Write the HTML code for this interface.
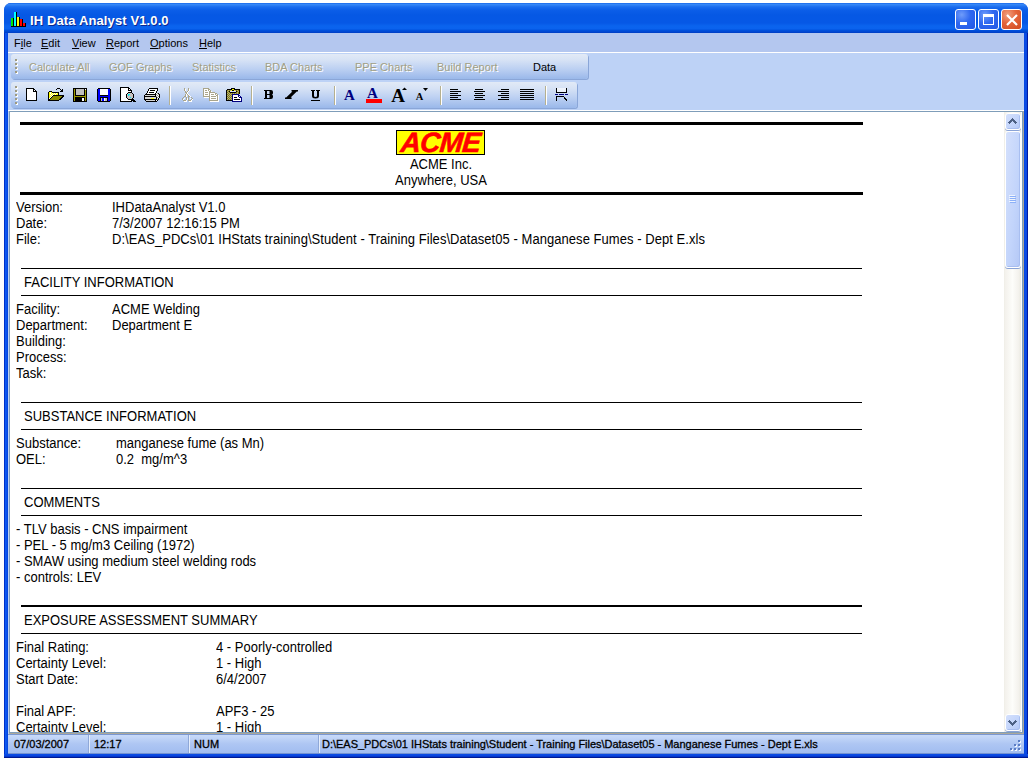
<!DOCTYPE html>
<html><head><meta charset="utf-8">
<style>
*{box-sizing:border-box}
html,body{margin:0;padding:0}
body{width:1033px;height:763px;overflow:hidden;background:#fff;position:relative;font-family:"Liberation Sans",sans-serif}
.a{position:absolute}
#win{left:4px;top:3px;width:1024px;height:755px;background:#0842d8;border-radius:7px 7px 0 0;overflow:hidden}
#title{left:0;top:0;width:1024px;height:30px;background:linear-gradient(to bottom,#0a5ae6 0px,#3a8cf8 1px,#3182f5 2px,#1a6cee 4px,#0c5ee8 7px,#0658e4 12px,#0658e6 20px,#0b64ee 23px,#0a62ee 26px,#0052de 27px,#0046d0 29px,#003cc0 30px)}
#titletext{left:26px;top:10px;font-size:13px;letter-spacing:0.12px;font-weight:bold;color:#fff;text-shadow:1px 1px 0 #0a2a90;white-space:nowrap}
#frameL{left:0;top:30px;width:4px;height:725px;background:linear-gradient(to right,#0030c8 0px,#0030c8 1px,#0a52f0 1px,#1060f4 2px,#0848e0 3px,#0848e0 4px)}
#frameR{left:1020px;top:30px;width:4px;height:725px;background:linear-gradient(to left,#001aa0 0px,#001aa0 1px,#0840d8 1px,#0a50ec 2px,#0848e0 3px,#0848e0 4px)}
#frameB{left:0;top:751px;width:1024px;height:4px;background:linear-gradient(to top,#001890 0px,#001890 1px,#0030c0 1px,#0840d8 2px,#0a4ae4 3px,#0a4ae4 4px)}
.cbtn{top:6px;width:21px;height:21px;border:1px solid #fff;border-radius:3px;
 background:radial-gradient(circle at 30% 25%,#6f9cfa 0%,#2f68f0 45%,#2257e4 100%)}
.cbtn.close{background:radial-gradient(circle at 30% 25%,#f0a080 0%,#e4643a 45%,#d04a20 100%)}
#client{left:8px;top:33px;width:1016px;height:721px;background:#bdd2f6}
#menubar{left:0;top:0;width:1016px;height:19px;background:#b4c7ef}
#menuline{left:0;top:19px;width:1016px;height:1px;background:#fff}
.menu{position:absolute;top:4px;font-size:11px;line-height:13px;color:#000;white-space:nowrap}
.ul{position:absolute;height:1px;background:#000;top:15px}
.tb{border-radius:3px;background:linear-gradient(to bottom,#e2eaf6 0%,#d6e2f5 25%,#bcd0f2 60%,#9ab8ea 100%);
 box-shadow:1px 1px 0 #8aa6d8}
.grip{width:2px;height:2px;background:#9e9a80;box-shadow:1px 1px 0 #fff}
.dis{position:absolute;font-size:11px;line-height:13px;color:#a29f84;text-shadow:1px 1px 0 #fff;white-space:nowrap}
.sbb{width:16px;border:1px solid #fff;border-radius:3px;background:linear-gradient(to bottom right,#d4e0fc,#c2d4fb 60%,#b4c8f6);box-shadow:inset -1px -1px 0 #a8bef0, 0 1px 0 #8aa3d6}
.sep{width:1px;background:#b5b090;box-shadow:1px 0 0 #fff}
#doc{left:9px;top:111px;width:1014px;height:622px;border:1px solid #7f9db9;background:#fff;overflow:hidden}
.t{position:absolute;font-size:13px;line-height:16px;color:#000;white-space:nowrap;transform:scaleY(1.07);transform-origin:0 12px}
.hl{position:absolute;height:1px;background:#000}
#status{left:0;top:701px;width:1016px;height:20px;border-top:1px solid #7b98d2;border-bottom:1px solid #7391d0;background:linear-gradient(to bottom,#c8daf9 0px,#c0d4f7 3px,#aec6f3 9px,#a2bdf0 18px)}
.st{position:absolute;top:3px;font-size:11px;line-height:13px;color:#000;-webkit-text-stroke:0.3px #000;white-space:nowrap}
.ssep{position:absolute;top:0px;width:1px;height:18px;background:#8fa8d8;box-shadow:1px 0 0 #e6eefc}
</style></head>
<body>
<div id="win" class="a">
 <div id="title" class="a"></div>
 <div id="frameL" class="a"></div>
 <div id="frameR" class="a"></div>
 <div id="frameB" class="a"></div>
 <!-- app icon -->
 <svg class="a" style="left:7px;top:9px" width="16" height="16" shape-rendering="crispEdges"><rect x="0" y="6" width="2" height="8" fill="#00e800"/><rect x="2" y="6" width="1" height="8" fill="#000"/><rect x="3" y="0" width="2" height="14" fill="#00ffff"/><rect x="5" y="0" width="1" height="14" fill="#000"/><rect x="6" y="5" width="2" height="9" fill="#ffff00"/><rect x="8" y="5" width="1" height="9" fill="#000"/><rect x="9" y="7" width="2" height="7" fill="#ff0000"/><rect x="11" y="7" width="1" height="7" fill="#000"/><rect x="12" y="11" width="2" height="3" fill="#ff0000"/><rect x="14" y="11" width="1" height="3" fill="#000"/><rect x="0" y="14" width="15" height="1" fill="#000"/></svg>
 <div id="titletext" class="a">IH Data Analyst V1.0.0</div>
 <div class="a cbtn" style="left:951px"><div class="a" style="left:4px;top:12px;width:7px;height:3px;background:#fff"></div></div>
 <div class="a cbtn" style="left:974px"><div class="a" style="left:4px;top:4px;width:11px;height:11px;border:1px solid #fff;border-top-width:3px"></div></div>
 <div class="a cbtn close" style="left:997px">
  <svg class="a" style="left:3px;top:3px" width="14" height="14"><path d="M2 2L12 12M12 2L2 12" stroke="#fff" stroke-width="2.2"/></svg>
 </div>
</div>
<div id="client" class="a">
 <div id="menubar" class="a"></div>
 <div id="menuline" class="a"></div>
 <div class="menu" style="left:6px">F<u>i</u>le</div>
 <div class="menu" style="left:33px"><u>E</u>dit</div>
 <div class="menu" style="left:64px"><u>V</u>iew</div>
 <div class="menu" style="left:98px"><u>R</u>eport</div>
 <div class="menu" style="left:142px"><u>O</u>ptions</div>
 <div class="menu" style="left:191px"><u>H</u>elp</div>

 <!-- toolbar 1 -->
 <div class="a tb" style="left:3px;top:21px;width:577px;height:25px"></div>
 <div class="a grip" style="left:7px;top:26px"></div>
 <div class="a grip" style="left:7px;top:30px"></div>
 <div class="a grip" style="left:7px;top:34px"></div>
 <div class="a grip" style="left:7px;top:38px"></div>
 <div class="dis" style="left:21px;top:28px">Calculate All</div>
 <div class="dis" style="left:101px;top:28px">GOF Graphs</div>
 <div class="dis" style="left:184px;top:28px">Statistics</div>
 <div class="dis" style="left:257px;top:28px">BDA Charts</div>
 <div class="dis" style="left:347px;top:28px">PPE Charts</div>
 <div class="dis" style="left:429px;top:28px">Build Report</div>
 <div class="menu" style="left:525px;top:28px">Data</div>

 <!-- toolbar 2 -->
 <div class="a tb" style="left:3px;top:49px;width:566px;height:26px"></div>
 

 <div class="a" style="left:0;top:77px;width:1016px;height:1px;background:#fff"></div>
 <div id="status" class="a">
  <div class="st" style="left:6px">07/03/2007</div>
  <div class="ssep" style="left:80px"></div>
  <div class="st" style="left:86px">12:17</div>
  <div class="ssep" style="left:180px"></div>
  <div class="st" style="left:186px">NUM</div>
  <div class="ssep" style="left:310px"></div>
  <div class="st" style="left:314px;letter-spacing:-0.02px">D:\EAS_PDCs\01 IHStats training\Student - Training Files\Dataset05 - Manganese Fumes - Dept E.xls</div>
 </div>
</div>

<div id="doc" class="a">
 <!-- coordinates relative to doc inner (origin at 10,112) -->
 <div class="a" style="left:10px;top:10px;width:843px;height:3px;background:#000"></div>
 <div class="a" style="left:386px;top:18px;width:89px;height:25px;background:#ff0;border:1px solid #000"></div>
 <div class="a" style="left:386px;top:15px;width:89px;text-align:center;font-size:28px;line-height:32px;font-weight:bold;font-style:italic;color:#f00;letter-spacing:-0.8px;-webkit-text-stroke:0.6px #f00;transform:skewX(-5deg)">ACME</div>
 <div class="t" style="left:0;top:45px;width:862px;text-align:center">ACME Inc.</div>
 <div class="t" style="left:0;top:61px;width:862px;text-align:center">Anywhere, USA</div>
 <div class="a" style="left:10px;top:80px;width:843px;height:3px;background:#000"></div>

 <div class="t" style="left:6px;top:88px">Version:</div><div class="t" style="left:102px;top:88px">IHDataAnalyst V1.0</div>
 <div class="t" style="left:6px;top:104px">Date:</div><div class="t" style="left:102px;top:104px">7/3/2007 12:16:15 PM</div>
 <div class="t" style="left:6px;top:120px">File:</div><div class="t" style="left:102px;top:120px;letter-spacing:0.05px">D:\EAS_PDCs\01 IHStats training\Student - Training Files\Dataset05 - Manganese Fumes - Dept E.xls</div>

 <div class="hl" style="left:11px;top:156px;width:841px"></div>
 <div class="t" style="left:14px;top:163px">FACILITY INFORMATION</div>
 <div class="hl" style="left:11px;top:183px;width:841px"></div>
 <div class="t" style="left:6px;top:190px">Facility:</div><div class="t" style="left:102px;top:190px">ACME Welding</div>
 <div class="t" style="left:6px;top:206px">Department:</div><div class="t" style="left:102px;top:206px">Department E</div>
 <div class="t" style="left:6px;top:222px">Building:</div>
 <div class="t" style="left:6px;top:238px">Process:</div>
 <div class="t" style="left:6px;top:254px">Task:</div>

 <div class="hl" style="left:11px;top:290px;width:841px"></div>
 <div class="t" style="left:14px;top:297px">SUBSTANCE INFORMATION</div>
 <div class="hl" style="left:11px;top:317px;width:841px"></div>
 <div class="t" style="left:6px;top:324px">Substance:</div><div class="t" style="left:106px;top:324px">manganese fume (as Mn)</div>
 <div class="t" style="left:6px;top:340px">OEL:</div><div class="t" style="left:106px;top:340px">0.2&nbsp; mg/m^3</div>

 <div class="hl" style="left:11px;top:376px;width:841px"></div>
 <div class="t" style="left:14px;top:383px">COMMENTS</div>
 <div class="hl" style="left:11px;top:403px;width:841px"></div>
 <div class="t" style="left:6px;top:410px">- TLV basis - CNS impairment</div>
 <div class="t" style="left:6px;top:426px">- PEL - 5 mg/m3 Ceiling (1972)</div>
 <div class="t" style="left:6px;top:442px">- SMAW using medium steel welding rods</div>
 <div class="t" style="left:6px;top:458px">- controls: LEV</div>

 <div class="hl" style="left:11px;top:493px;width:841px;height:2px"></div>
 <div class="t" style="left:14px;top:501px">EXPOSURE ASSESSMENT SUMMARY</div>
 <div class="hl" style="left:11px;top:521px;width:841px"></div>
 <div class="t" style="left:6px;top:528px">Final Rating:</div><div class="t" style="left:206px;top:528px">4 - Poorly-controlled</div>
 <div class="t" style="left:6px;top:544px">Certainty Level:</div><div class="t" style="left:206px;top:544px">1 - High</div>
 <div class="t" style="left:6px;top:560px">Start Date:</div><div class="t" style="left:206px;top:560px">6/4/2007</div>
 <div class="t" style="left:6px;top:592px">Final APF:</div><div class="t" style="left:206px;top:592px">APF3 - 25</div>
 <div class="t" style="left:6px;top:608px">Certainty Level:</div><div class="t" style="left:206px;top:608px">1 - High</div>
</div>
<svg class="a" style="left:0;top:0" width="600" height="112" shape-rendering="crispEdges">
 <!-- grips -->
 <g fill="#fff"><rect x="16" y="87" width="2" height="2"/><rect x="16" y="91" width="2" height="2"/><rect x="16" y="95" width="2" height="2"/><rect x="16" y="99" width="2" height="2"/><rect x="16" y="103" width="2" height="2"/></g>
 <g fill="#9e9a80"><rect x="15" y="86" width="2" height="2"/><rect x="15" y="90" width="2" height="2"/><rect x="15" y="94" width="2" height="2"/><rect x="15" y="98" width="2" height="2"/><rect x="15" y="102" width="2" height="2"/></g>
 <!-- new -->
 <path d="M26 88H33L37 92V101H26Z" fill="#000"/>
 <path d="M27 89H33V92H36V100H27Z" fill="#fff"/>
 <rect x="34" y="90" width="1" height="1" fill="#fff"/>
 <!-- open -->
 <g fill="#ffff00"><rect x="49" y="92" width="3" height="1"/><rect x="49" y="93" width="9" height="2"/><rect x="49" y="95" width="4" height="1"/><rect x="49" y="96" width="3" height="1"/><rect x="49" y="97" width="2" height="1"/><rect x="49" y="98" width="1" height="1"/></g><g fill="#fff"><rect x="50" y="93" width="1" height="1"/><rect x="52" y="93" width="1" height="1"/><rect x="54" y="93" width="1" height="1"/><rect x="56" y="93" width="1" height="1"/><rect x="51" y="94" width="1" height="1"/><rect x="53" y="94" width="1" height="1"/><rect x="55" y="94" width="1" height="1"/><rect x="50" y="95" width="1" height="1"/><rect x="52" y="95" width="1" height="1"/><rect x="51" y="96" width="1" height="1"/><rect x="50" y="97" width="1" height="1"/><rect x="49" y="98" width="1" height="1"/><rect x="50" y="92" width="1" height="1"/></g><g fill="#8c8c00"><rect x="53" y="96" width="9" height="1"/><rect x="52" y="97" width="9" height="1"/><rect x="51" y="98" width="9" height="1"/><rect x="50" y="99" width="9" height="1"/></g><g fill="#000"><rect x="49" y="91" width="3" height="1"/><rect x="48" y="92" width="1" height="9"/><rect x="52" y="92" width="7" height="1"/><rect x="58" y="92" width="1" height="3"/><rect x="53" y="95" width="11" height="1"/><rect x="62" y="96" width="2" height="1"/><rect x="61" y="97" width="2" height="1"/><rect x="60" y="98" width="2" height="1"/><rect x="59" y="99" width="2" height="1"/><rect x="52" y="96" width="1" height="1"/><rect x="51" y="97" width="1" height="1"/><rect x="50" y="98" width="1" height="1"/><rect x="49" y="99" width="1" height="1"/><rect x="48" y="100" width="11" height="1"/><rect x="56" y="89" width="1" height="1"/><rect x="57" y="88" width="3" height="1"/><rect x="60" y="89" width="1" height="1"/><rect x="62" y="89" width="1" height="1"/><rect x="61" y="90" width="2" height="1"/><rect x="60" y="91" width="3" height="1"/></g>
 <!-- save -->
 <rect x="73" y="88" width="14" height="1" fill="#000"/><rect x="73" y="89" width="1" height="1" fill="#000"/><rect x="74" y="89" width="1" height="1" fill="#9c9800"/><rect x="75" y="89" width="1" height="1" fill="#000"/><rect x="76" y="89" width="8" height="1" fill="#c0c0c0"/><rect x="84" y="89" width="1" height="1" fill="#000"/><rect x="85" y="89" width="1" height="1" fill="#fff"/><rect x="86" y="89" width="1" height="1" fill="#000"/><rect x="73" y="90" width="1" height="1" fill="#000"/><rect x="74" y="90" width="1" height="1" fill="#9c9800"/><rect x="75" y="90" width="1" height="1" fill="#000"/><rect x="76" y="90" width="8" height="1" fill="#c0c0c0"/><rect x="84" y="90" width="1" height="1" fill="#000"/><rect x="85" y="90" width="1" height="1" fill="#9c9800"/><rect x="86" y="90" width="1" height="1" fill="#000"/><rect x="73" y="91" width="1" height="1" fill="#000"/><rect x="74" y="91" width="1" height="1" fill="#9c9800"/><rect x="75" y="91" width="1" height="1" fill="#000"/><rect x="76" y="91" width="8" height="1" fill="#c0c0c0"/><rect x="84" y="91" width="1" height="1" fill="#000"/><rect x="85" y="91" width="1" height="1" fill="#9c9800"/><rect x="86" y="91" width="1" height="1" fill="#000"/><rect x="73" y="92" width="1" height="1" fill="#000"/><rect x="74" y="92" width="1" height="1" fill="#9c9800"/><rect x="75" y="92" width="1" height="1" fill="#000"/><rect x="76" y="92" width="8" height="1" fill="#c0c0c0"/><rect x="84" y="92" width="1" height="1" fill="#000"/><rect x="85" y="92" width="1" height="1" fill="#9c9800"/><rect x="86" y="92" width="1" height="1" fill="#000"/><rect x="73" y="93" width="1" height="1" fill="#000"/><rect x="74" y="93" width="1" height="1" fill="#9c9800"/><rect x="75" y="93" width="1" height="1" fill="#000"/><rect x="76" y="93" width="8" height="1" fill="#c0c0c0"/><rect x="84" y="93" width="1" height="1" fill="#000"/><rect x="85" y="93" width="1" height="1" fill="#9c9800"/><rect x="86" y="93" width="1" height="1" fill="#000"/><rect x="73" y="94" width="1" height="1" fill="#000"/><rect x="74" y="94" width="1" height="1" fill="#9c9800"/><rect x="75" y="94" width="1" height="1" fill="#000"/><rect x="76" y="94" width="8" height="1" fill="#c0c0c0"/><rect x="84" y="94" width="1" height="1" fill="#000"/><rect x="85" y="94" width="1" height="1" fill="#9c9800"/><rect x="86" y="94" width="1" height="1" fill="#000"/><rect x="73" y="95" width="1" height="1" fill="#000"/><rect x="74" y="95" width="1" height="1" fill="#9c9800"/><rect x="75" y="95" width="10" height="1" fill="#000"/><rect x="85" y="95" width="1" height="1" fill="#9c9800"/><rect x="86" y="95" width="1" height="1" fill="#000"/><rect x="73" y="96" width="1" height="1" fill="#000"/><rect x="74" y="96" width="12" height="1" fill="#9c9800"/><rect x="86" y="96" width="1" height="1" fill="#000"/><rect x="73" y="97" width="1" height="1" fill="#000"/><rect x="74" y="97" width="1" height="1" fill="#9c9800"/><rect x="75" y="97" width="10" height="1" fill="#000"/><rect x="85" y="97" width="1" height="1" fill="#9c9800"/><rect x="86" y="97" width="1" height="1" fill="#000"/><rect x="73" y="98" width="1" height="1" fill="#000"/><rect x="74" y="98" width="1" height="1" fill="#9c9800"/><rect x="75" y="98" width="7" height="1" fill="#000"/><rect x="82" y="98" width="2" height="1" fill="#fff"/><rect x="84" y="98" width="1" height="1" fill="#000"/><rect x="85" y="98" width="1" height="1" fill="#9c9800"/><rect x="86" y="98" width="1" height="1" fill="#000"/><rect x="73" y="99" width="1" height="1" fill="#000"/><rect x="74" y="99" width="1" height="1" fill="#9c9800"/><rect x="75" y="99" width="7" height="1" fill="#000"/><rect x="82" y="99" width="2" height="1" fill="#fff"/><rect x="84" y="99" width="1" height="1" fill="#000"/><rect x="85" y="99" width="1" height="1" fill="#9c9800"/><rect x="86" y="99" width="1" height="1" fill="#000"/><rect x="73" y="100" width="1" height="1" fill="#000"/><rect x="74" y="100" width="1" height="1" fill="#9c9800"/><rect x="75" y="100" width="7" height="1" fill="#000"/><rect x="82" y="100" width="2" height="1" fill="#fff"/><rect x="84" y="100" width="1" height="1" fill="#000"/><rect x="85" y="100" width="1" height="1" fill="#9c9800"/><rect x="86" y="100" width="1" height="1" fill="#000"/><rect x="73" y="101" width="14" height="1" fill="#000"/>
 <!-- save as -->
 <rect x="98" y="88" width="12" height="1" fill="#000"/><rect x="97" y="89" width="1" height="1" fill="#000"/><rect x="98" y="89" width="2" height="1" fill="#0000ff"/><rect x="100" y="89" width="8" height="1" fill="#fff"/><rect x="108" y="89" width="2" height="1" fill="#0000ff"/><rect x="110" y="89" width="1" height="1" fill="#000"/><rect x="97" y="90" width="1" height="1" fill="#000"/><rect x="98" y="90" width="2" height="1" fill="#0000ff"/><rect x="100" y="90" width="8" height="1" fill="#fff"/><rect x="108" y="90" width="2" height="1" fill="#0000ff"/><rect x="110" y="90" width="1" height="1" fill="#000"/><rect x="97" y="91" width="1" height="1" fill="#000"/><rect x="98" y="91" width="2" height="1" fill="#0000ff"/><rect x="100" y="91" width="8" height="1" fill="#fff"/><rect x="108" y="91" width="2" height="1" fill="#0000ff"/><rect x="110" y="91" width="1" height="1" fill="#000"/><rect x="97" y="92" width="1" height="1" fill="#000"/><rect x="98" y="92" width="2" height="1" fill="#0000ff"/><rect x="100" y="92" width="8" height="1" fill="#fff"/><rect x="108" y="92" width="2" height="1" fill="#0000ff"/><rect x="110" y="92" width="1" height="1" fill="#000"/><rect x="97" y="93" width="1" height="1" fill="#000"/><rect x="98" y="93" width="2" height="1" fill="#0000ff"/><rect x="100" y="93" width="8" height="1" fill="#fff"/><rect x="108" y="93" width="2" height="1" fill="#0000ff"/><rect x="110" y="93" width="1" height="1" fill="#000"/><rect x="97" y="94" width="1" height="1" fill="#000"/><rect x="98" y="94" width="2" height="1" fill="#0000ff"/><rect x="100" y="94" width="8" height="1" fill="#fff"/><rect x="108" y="94" width="2" height="1" fill="#0000ff"/><rect x="110" y="94" width="1" height="1" fill="#000"/><rect x="97" y="95" width="1" height="1" fill="#000"/><rect x="98" y="95" width="2" height="1" fill="#0000ff"/><rect x="100" y="95" width="8" height="1" fill="#000"/><rect x="108" y="95" width="2" height="1" fill="#0000ff"/><rect x="110" y="95" width="1" height="1" fill="#000"/><rect x="97" y="96" width="1" height="1" fill="#000"/><rect x="98" y="96" width="12" height="1" fill="#0000ff"/><rect x="110" y="96" width="1" height="1" fill="#000"/><rect x="97" y="97" width="1" height="1" fill="#000"/><rect x="98" y="97" width="2" height="1" fill="#0000ff"/><rect x="100" y="97" width="8" height="1" fill="#000"/><rect x="108" y="97" width="2" height="1" fill="#0000ff"/><rect x="110" y="97" width="1" height="1" fill="#000"/><rect x="97" y="98" width="1" height="1" fill="#000"/><rect x="98" y="98" width="2" height="1" fill="#0000ff"/><rect x="100" y="98" width="1" height="1" fill="#000"/><rect x="101" y="98" width="1" height="1" fill="#c0c0c0"/><rect x="102" y="98" width="2" height="1" fill="#0000ff"/><rect x="104" y="98" width="1" height="1" fill="#fff"/><rect x="105" y="98" width="2" height="1" fill="#c0c0c0"/><rect x="107" y="98" width="1" height="1" fill="#000"/><rect x="108" y="98" width="2" height="1" fill="#0000ff"/><rect x="110" y="98" width="1" height="1" fill="#000"/><rect x="97" y="99" width="1" height="1" fill="#000"/><rect x="98" y="99" width="2" height="1" fill="#0000ff"/><rect x="100" y="99" width="1" height="1" fill="#000"/><rect x="101" y="99" width="1" height="1" fill="#c0c0c0"/><rect x="102" y="99" width="2" height="1" fill="#0000ff"/><rect x="104" y="99" width="1" height="1" fill="#fff"/><rect x="105" y="99" width="2" height="1" fill="#c0c0c0"/><rect x="107" y="99" width="1" height="1" fill="#000"/><rect x="108" y="99" width="2" height="1" fill="#0000ff"/><rect x="110" y="99" width="1" height="1" fill="#000"/><rect x="97" y="100" width="1" height="1" fill="#000"/><rect x="98" y="100" width="2" height="1" fill="#0000ff"/><rect x="100" y="100" width="1" height="1" fill="#000"/><rect x="101" y="100" width="1" height="1" fill="#c0c0c0"/><rect x="102" y="100" width="2" height="1" fill="#0000ff"/><rect x="104" y="100" width="1" height="1" fill="#fff"/><rect x="105" y="100" width="2" height="1" fill="#c0c0c0"/><rect x="107" y="100" width="1" height="1" fill="#000"/><rect x="108" y="100" width="2" height="1" fill="#0000ff"/><rect x="110" y="100" width="1" height="1" fill="#000"/><rect x="98" y="101" width="12" height="1" fill="#000"/>
 <!-- preview -->
 <rect x="120" y="87" width="9" height="1" fill="#000"/><rect x="120" y="88" width="1" height="1" fill="#000"/><rect x="121" y="88" width="7" height="1" fill="#fff"/><rect x="128" y="88" width="2" height="1" fill="#000"/><rect x="120" y="89" width="1" height="1" fill="#000"/><rect x="121" y="89" width="7" height="1" fill="#fff"/><rect x="128" y="89" width="1" height="1" fill="#000"/><rect x="129" y="89" width="1" height="1" fill="#fff"/><rect x="130" y="89" width="1" height="1" fill="#000"/><rect x="120" y="90" width="1" height="1" fill="#000"/><rect x="121" y="90" width="7" height="1" fill="#fff"/><rect x="128" y="90" width="4" height="1" fill="#000"/><rect x="120" y="91" width="1" height="1" fill="#000"/><rect x="121" y="91" width="10" height="1" fill="#fff"/><rect x="131" y="91" width="1" height="1" fill="#000"/><rect x="120" y="92" width="1" height="1" fill="#000"/><rect x="121" y="92" width="7" height="1" fill="#fff"/><rect x="128" y="92" width="4" height="1" fill="#000"/><rect x="120" y="93" width="1" height="1" fill="#000"/><rect x="121" y="93" width="6" height="1" fill="#fff"/><rect x="127" y="93" width="1" height="1" fill="#000"/><rect x="128" y="93" width="4" height="1" fill="#c8c4c4"/><rect x="132" y="93" width="1" height="1" fill="#000"/><rect x="120" y="94" width="1" height="1" fill="#000"/><rect x="121" y="94" width="5" height="1" fill="#fff"/><rect x="126" y="94" width="1" height="1" fill="#000"/><rect x="127" y="94" width="1" height="1" fill="#c8c4c4"/><rect x="128" y="94" width="2" height="1" fill="#00f0f0"/><rect x="130" y="94" width="3" height="1" fill="#c8c4c4"/><rect x="133" y="94" width="1" height="1" fill="#000"/><rect x="120" y="95" width="1" height="1" fill="#000"/><rect x="121" y="95" width="5" height="1" fill="#fff"/><rect x="126" y="95" width="1" height="1" fill="#000"/><rect x="127" y="95" width="1" height="1" fill="#c8c4c4"/><rect x="128" y="95" width="1" height="1" fill="#00f0f0"/><rect x="129" y="95" width="4" height="1" fill="#c8c4c4"/><rect x="133" y="95" width="1" height="1" fill="#000"/><rect x="120" y="96" width="1" height="1" fill="#000"/><rect x="121" y="96" width="5" height="1" fill="#fff"/><rect x="126" y="96" width="1" height="1" fill="#000"/><rect x="127" y="96" width="6" height="1" fill="#c8c4c4"/><rect x="133" y="96" width="1" height="1" fill="#000"/><rect x="120" y="97" width="1" height="1" fill="#000"/><rect x="121" y="97" width="5" height="1" fill="#fff"/><rect x="126" y="97" width="1" height="1" fill="#000"/><rect x="127" y="97" width="3" height="1" fill="#c8c4c4"/><rect x="130" y="97" width="1" height="1" fill="#00f0f0"/><rect x="131" y="97" width="2" height="1" fill="#c8c4c4"/><rect x="133" y="97" width="1" height="1" fill="#000"/><rect x="120" y="98" width="1" height="1" fill="#000"/><rect x="121" y="98" width="6" height="1" fill="#fff"/><rect x="127" y="98" width="1" height="1" fill="#000"/><rect x="128" y="98" width="4" height="1" fill="#c8c4c4"/><rect x="132" y="98" width="1" height="1" fill="#000"/><rect x="120" y="99" width="1" height="1" fill="#000"/><rect x="121" y="99" width="7" height="1" fill="#fff"/><rect x="128" y="99" width="6" height="1" fill="#000"/><rect x="120" y="100" width="1" height="1" fill="#000"/><rect x="121" y="100" width="10" height="1" fill="#fff"/><rect x="131" y="100" width="4" height="1" fill="#000"/><rect x="120" y="101" width="12" height="1" fill="#000"/><rect x="133" y="101" width="3" height="1" fill="#000"/>
 <!-- print -->
 <rect x="149" y="88" width="9" height="1" fill="#000"/><rect x="148" y="89" width="1" height="1" fill="#000"/><rect x="149" y="89" width="8" height="1" fill="#fff"/><rect x="157" y="89" width="1" height="1" fill="#000"/><rect x="148" y="90" width="1" height="1" fill="#000"/><rect x="149" y="90" width="1" height="1" fill="#fff"/><rect x="150" y="90" width="5" height="1" fill="#000"/><rect x="155" y="90" width="2" height="1" fill="#fff"/><rect x="157" y="90" width="1" height="1" fill="#000"/><rect x="147" y="91" width="1" height="1" fill="#000"/><rect x="148" y="91" width="8" height="1" fill="#fff"/><rect x="156" y="91" width="1" height="1" fill="#000"/><rect x="147" y="92" width="1" height="1" fill="#000"/><rect x="148" y="92" width="1" height="1" fill="#fff"/><rect x="149" y="92" width="5" height="1" fill="#000"/><rect x="154" y="92" width="2" height="1" fill="#fff"/><rect x="156" y="92" width="1" height="1" fill="#000"/><rect x="146" y="93" width="1" height="1" fill="#000"/><rect x="147" y="93" width="8" height="1" fill="#fff"/><rect x="155" y="93" width="1" height="1" fill="#000"/><rect x="156" y="93" width="1" height="1" fill="#fff"/><rect x="157" y="93" width="1" height="1" fill="#9a9a9a"/><rect x="158" y="93" width="1" height="1" fill="#000"/><rect x="145" y="94" width="11" height="1" fill="#000"/><rect x="156" y="94" width="1" height="1" fill="#9a9a9a"/><rect x="157" y="94" width="1" height="1" fill="#fff"/><rect x="158" y="94" width="1" height="1" fill="#9a9a9a"/><rect x="159" y="94" width="1" height="1" fill="#000"/><rect x="144" y="95" width="1" height="1" fill="#000"/><rect x="145" y="95" width="10" height="1" fill="#d6d6d6"/><rect x="155" y="95" width="1" height="1" fill="#000"/><rect x="156" y="95" width="1" height="1" fill="#fff"/><rect x="157" y="95" width="1" height="1" fill="#9a9a9a"/><rect x="158" y="95" width="1" height="1" fill="#fff"/><rect x="159" y="95" width="1" height="1" fill="#000"/><rect x="144" y="96" width="12" height="1" fill="#000"/><rect x="156" y="96" width="1" height="1" fill="#9a9a9a"/><rect x="157" y="96" width="1" height="1" fill="#fff"/><rect x="158" y="96" width="1" height="1" fill="#9a9a9a"/><rect x="159" y="96" width="1" height="1" fill="#000"/><rect x="144" y="97" width="1" height="1" fill="#000"/><rect x="145" y="97" width="11" height="1" fill="#d6d6d6"/><rect x="156" y="97" width="1" height="1" fill="#000"/><rect x="157" y="97" width="1" height="1" fill="#9a9a9a"/><rect x="158" y="97" width="1" height="1" fill="#fff"/><rect x="159" y="97" width="1" height="1" fill="#000"/><rect x="144" y="98" width="1" height="1" fill="#000"/><rect x="145" y="98" width="6" height="1" fill="#d6d6d6"/><rect x="151" y="98" width="3" height="1" fill="#ffff00"/><rect x="154" y="98" width="2" height="1" fill="#d6d6d6"/><rect x="156" y="98" width="1" height="1" fill="#000"/><rect x="157" y="98" width="1" height="1" fill="#fff"/><rect x="158" y="98" width="1" height="1" fill="#000"/><rect x="144" y="99" width="13" height="1" fill="#000"/><rect x="157" y="99" width="1" height="1" fill="#9a9a9a"/><rect x="158" y="99" width="1" height="1" fill="#000"/><rect x="145" y="100" width="1" height="1" fill="#000"/><rect x="146" y="100" width="9" height="1" fill="#d6d6d6"/><rect x="155" y="100" width="1" height="1" fill="#000"/><rect x="156" y="100" width="1" height="1" fill="#fff"/><rect x="157" y="100" width="1" height="1" fill="#000"/><rect x="146" y="101" width="11" height="1" fill="#000"/>
 <!-- sep -->
 <rect x="169" y="86" width="1" height="19" fill="#b5b090"/><rect x="170" y="86" width="1" height="19" fill="#fff"/>
 <!-- cut disabled -->
 <rect x="184" y="88" width="1" height="1" fill="#aaa58a"/><rect x="188" y="88" width="1" height="1" fill="#aaa58a"/><rect x="184" y="89" width="1" height="1" fill="#aaa58a"/><rect x="185" y="89" width="1" height="1" fill="#fff"/><rect x="188" y="89" width="1" height="1" fill="#aaa58a"/><rect x="189" y="89" width="1" height="1" fill="#fff"/><rect x="184" y="90" width="1" height="1" fill="#aaa58a"/><rect x="185" y="90" width="1" height="1" fill="#fff"/><rect x="188" y="90" width="1" height="1" fill="#aaa58a"/><rect x="189" y="90" width="1" height="1" fill="#fff"/><rect x="185" y="91" width="1" height="1" fill="#aaa58a"/><rect x="187" y="91" width="1" height="1" fill="#aaa58a"/><rect x="188" y="91" width="1" height="1" fill="#fff"/><rect x="185" y="92" width="2" height="1" fill="#aaa58a"/><rect x="187" y="92" width="1" height="1" fill="#fff"/><rect x="186" y="93" width="1" height="1" fill="#aaa58a"/><rect x="187" y="93" width="1" height="1" fill="#fff"/><rect x="185" y="94" width="1" height="1" fill="#aaa58a"/><rect x="186" y="94" width="1" height="1" fill="#fff"/><rect x="187" y="94" width="1" height="1" fill="#aaa58a"/><rect x="188" y="94" width="1" height="1" fill="#fff"/><rect x="185" y="95" width="1" height="1" fill="#aaa58a"/><rect x="186" y="95" width="1" height="1" fill="#fff"/><rect x="188" y="95" width="1" height="1" fill="#aaa58a"/><rect x="189" y="95" width="1" height="1" fill="#fff"/><rect x="184" y="96" width="2" height="1" fill="#aaa58a"/><rect x="186" y="96" width="1" height="1" fill="#fff"/><rect x="188" y="96" width="2" height="1" fill="#aaa58a"/><rect x="190" y="96" width="1" height="1" fill="#fff"/><rect x="183" y="97" width="1" height="1" fill="#aaa58a"/><rect x="186" y="97" width="1" height="1" fill="#aaa58a"/><rect x="188" y="97" width="1" height="1" fill="#aaa58a"/><rect x="191" y="97" width="1" height="1" fill="#aaa58a"/><rect x="182" y="98" width="1" height="1" fill="#aaa58a"/><rect x="184" y="98" width="1" height="1" fill="#fff"/><rect x="186" y="98" width="1" height="1" fill="#aaa58a"/><rect x="187" y="98" width="1" height="1" fill="#fff"/><rect x="188" y="98" width="1" height="1" fill="#aaa58a"/><rect x="190" y="98" width="1" height="1" fill="#fff"/><rect x="192" y="98" width="1" height="1" fill="#aaa58a"/><rect x="182" y="99" width="1" height="1" fill="#aaa58a"/><rect x="183" y="99" width="1" height="1" fill="#fff"/><rect x="186" y="99" width="1" height="1" fill="#aaa58a"/><rect x="187" y="99" width="1" height="1" fill="#fff"/><rect x="188" y="99" width="1" height="1" fill="#aaa58a"/><rect x="191" y="99" width="1" height="1" fill="#aaa58a"/><rect x="192" y="99" width="1" height="1" fill="#fff"/><rect x="183" y="100" width="3" height="1" fill="#aaa58a"/><rect x="186" y="100" width="1" height="1" fill="#fff"/><rect x="188" y="100" width="3" height="1" fill="#aaa58a"/><rect x="191" y="100" width="1" height="1" fill="#fff"/><rect x="184" y="101" width="3" height="1" fill="#fff"/><rect x="189" y="101" width="3" height="1" fill="#fff"/>
 <!-- copy disabled -->
 <rect x="203" y="88" width="6" height="1" fill="#aaa58a"/><rect x="203" y="89" width="1" height="1" fill="#aaa58a"/><rect x="204" y="89" width="4" height="1" fill="#fff"/><rect x="208" y="89" width="2" height="1" fill="#aaa58a"/><rect x="203" y="90" width="1" height="1" fill="#aaa58a"/><rect x="204" y="90" width="1" height="1" fill="#fff"/><rect x="205" y="90" width="2" height="1" fill="#aaa58a"/><rect x="207" y="90" width="1" height="1" fill="#fff"/><rect x="208" y="90" width="1" height="1" fill="#aaa58a"/><rect x="209" y="90" width="1" height="1" fill="#fff"/><rect x="210" y="90" width="1" height="1" fill="#aaa58a"/><rect x="203" y="91" width="1" height="1" fill="#aaa58a"/><rect x="204" y="91" width="5" height="1" fill="#fff"/><rect x="209" y="91" width="2" height="1" fill="#aaa58a"/><rect x="211" y="91" width="1" height="1" fill="#fff"/><rect x="203" y="92" width="1" height="1" fill="#aaa58a"/><rect x="204" y="92" width="1" height="1" fill="#fff"/><rect x="205" y="92" width="3" height="1" fill="#aaa58a"/><rect x="208" y="92" width="1" height="1" fill="#fff"/><rect x="209" y="92" width="6" height="1" fill="#aaa58a"/><rect x="203" y="93" width="1" height="1" fill="#aaa58a"/><rect x="204" y="93" width="5" height="1" fill="#fff"/><rect x="209" y="93" width="1" height="1" fill="#aaa58a"/><rect x="210" y="93" width="5" height="1" fill="#fff"/><rect x="215" y="93" width="2" height="1" fill="#aaa58a"/><rect x="203" y="94" width="1" height="1" fill="#aaa58a"/><rect x="204" y="94" width="1" height="1" fill="#fff"/><rect x="205" y="94" width="3" height="1" fill="#aaa58a"/><rect x="208" y="94" width="1" height="1" fill="#fff"/><rect x="209" y="94" width="1" height="1" fill="#aaa58a"/><rect x="210" y="94" width="1" height="1" fill="#fff"/><rect x="211" y="94" width="3" height="1" fill="#aaa58a"/><rect x="214" y="94" width="1" height="1" fill="#fff"/><rect x="215" y="94" width="1" height="1" fill="#aaa58a"/><rect x="216" y="94" width="1" height="1" fill="#fff"/><rect x="217" y="94" width="1" height="1" fill="#aaa58a"/><rect x="203" y="95" width="1" height="1" fill="#aaa58a"/><rect x="204" y="95" width="5" height="1" fill="#fff"/><rect x="209" y="95" width="1" height="1" fill="#aaa58a"/><rect x="210" y="95" width="6" height="1" fill="#fff"/><rect x="216" y="95" width="2" height="1" fill="#aaa58a"/><rect x="218" y="95" width="1" height="1" fill="#fff"/><rect x="203" y="96" width="7" height="1" fill="#aaa58a"/><rect x="210" y="96" width="1" height="1" fill="#fff"/><rect x="211" y="96" width="5" height="1" fill="#aaa58a"/><rect x="216" y="96" width="1" height="1" fill="#fff"/><rect x="217" y="96" width="1" height="1" fill="#aaa58a"/><rect x="218" y="96" width="1" height="1" fill="#fff"/><rect x="204" y="97" width="5" height="1" fill="#fff"/><rect x="209" y="97" width="1" height="1" fill="#aaa58a"/><rect x="210" y="97" width="7" height="1" fill="#fff"/><rect x="217" y="97" width="1" height="1" fill="#aaa58a"/><rect x="218" y="97" width="1" height="1" fill="#fff"/><rect x="209" y="98" width="1" height="1" fill="#aaa58a"/><rect x="210" y="98" width="1" height="1" fill="#fff"/><rect x="211" y="98" width="5" height="1" fill="#aaa58a"/><rect x="216" y="98" width="1" height="1" fill="#fff"/><rect x="217" y="98" width="1" height="1" fill="#aaa58a"/><rect x="218" y="98" width="1" height="1" fill="#fff"/><rect x="209" y="99" width="1" height="1" fill="#aaa58a"/><rect x="210" y="99" width="7" height="1" fill="#fff"/><rect x="217" y="99" width="1" height="1" fill="#aaa58a"/><rect x="218" y="99" width="1" height="1" fill="#fff"/><rect x="209" y="100" width="9" height="1" fill="#aaa58a"/><rect x="218" y="100" width="1" height="1" fill="#fff"/><rect x="210" y="101" width="9" height="1" fill="#fff"/>
 <!-- paste -->
 <rect x="231" y="88" width="4" height="1" fill="#000"/><rect x="227" y="89" width="5" height="1" fill="#000"/><rect x="232" y="89" width="2" height="1" fill="#ffff00"/><rect x="234" y="89" width="6" height="1" fill="#000"/><rect x="226" y="90" width="1" height="1" fill="#000"/><rect x="227" y="90" width="1" height="1" fill="#8c8400"/><rect x="228" y="90" width="1" height="1" fill="#a8a48c"/><rect x="229" y="90" width="1" height="1" fill="#8c8400"/><rect x="230" y="90" width="1" height="1" fill="#a8a48c"/><rect x="231" y="90" width="1" height="1" fill="#ffff00"/><rect x="232" y="90" width="2" height="1" fill="#000"/><rect x="234" y="90" width="1" height="1" fill="#ffff00"/><rect x="235" y="90" width="1" height="1" fill="#a8a48c"/><rect x="236" y="90" width="1" height="1" fill="#8c8400"/><rect x="237" y="90" width="1" height="1" fill="#a8a48c"/><rect x="238" y="90" width="1" height="1" fill="#8c8400"/><rect x="239" y="90" width="1" height="1" fill="#000"/><rect x="226" y="91" width="1" height="1" fill="#000"/><rect x="227" y="91" width="1" height="1" fill="#a8a48c"/><rect x="228" y="91" width="1" height="1" fill="#8c8400"/><rect x="229" y="91" width="1" height="1" fill="#000"/><rect x="230" y="91" width="6" height="1" fill="#d8e4ff"/><rect x="236" y="91" width="1" height="1" fill="#000"/><rect x="237" y="91" width="1" height="1" fill="#8c8400"/><rect x="238" y="91" width="1" height="1" fill="#a8a48c"/><rect x="239" y="91" width="1" height="1" fill="#000"/><rect x="226" y="92" width="1" height="1" fill="#000"/><rect x="227" y="92" width="1" height="1" fill="#8c8400"/><rect x="228" y="92" width="1" height="1" fill="#a8a48c"/><rect x="229" y="92" width="1" height="1" fill="#8c8400"/><rect x="230" y="92" width="6" height="1" fill="#000"/><rect x="236" y="92" width="1" height="1" fill="#8c8400"/><rect x="237" y="92" width="1" height="1" fill="#a8a48c"/><rect x="238" y="92" width="1" height="1" fill="#8c8400"/><rect x="239" y="92" width="1" height="1" fill="#000"/><rect x="226" y="93" width="1" height="1" fill="#000"/><rect x="227" y="93" width="1" height="1" fill="#a8a48c"/><rect x="228" y="93" width="1" height="1" fill="#8c8400"/><rect x="229" y="93" width="1" height="1" fill="#a8a48c"/><rect x="230" y="93" width="1" height="1" fill="#8c8400"/><rect x="231" y="93" width="1" height="1" fill="#a8a48c"/><rect x="232" y="93" width="1" height="1" fill="#8c8400"/><rect x="233" y="93" width="1" height="1" fill="#a8a48c"/><rect x="234" y="93" width="1" height="1" fill="#8c8400"/><rect x="235" y="93" width="1" height="1" fill="#a8a48c"/><rect x="236" y="93" width="1" height="1" fill="#8c8400"/><rect x="237" y="93" width="1" height="1" fill="#a8a48c"/><rect x="238" y="93" width="1" height="1" fill="#8c8400"/><rect x="239" y="93" width="1" height="1" fill="#000"/><rect x="226" y="94" width="1" height="1" fill="#000"/><rect x="227" y="94" width="1" height="1" fill="#8c8400"/><rect x="228" y="94" width="1" height="1" fill="#a8a48c"/><rect x="229" y="94" width="1" height="1" fill="#8c8400"/><rect x="230" y="94" width="1" height="1" fill="#a8a48c"/><rect x="231" y="94" width="1" height="1" fill="#8c8400"/><rect x="232" y="94" width="7" height="1" fill="#000080"/><rect x="226" y="95" width="1" height="1" fill="#000"/><rect x="227" y="95" width="1" height="1" fill="#a8a48c"/><rect x="228" y="95" width="1" height="1" fill="#8c8400"/><rect x="229" y="95" width="1" height="1" fill="#a8a48c"/><rect x="230" y="95" width="1" height="1" fill="#8c8400"/><rect x="231" y="95" width="1" height="1" fill="#a8a48c"/><rect x="232" y="95" width="1" height="1" fill="#000080"/><rect x="233" y="95" width="5" height="1" fill="#fff"/><rect x="238" y="95" width="2" height="1" fill="#000080"/><rect x="226" y="96" width="1" height="1" fill="#000"/><rect x="227" y="96" width="1" height="1" fill="#8c8400"/><rect x="228" y="96" width="1" height="1" fill="#a8a48c"/><rect x="229" y="96" width="1" height="1" fill="#8c8400"/><rect x="230" y="96" width="1" height="1" fill="#a8a48c"/><rect x="231" y="96" width="1" height="1" fill="#8c8400"/><rect x="232" y="96" width="1" height="1" fill="#000080"/><rect x="233" y="96" width="5" height="1" fill="#fff"/><rect x="238" y="96" width="1" height="1" fill="#000080"/><rect x="239" y="96" width="1" height="1" fill="#fff"/><rect x="240" y="96" width="1" height="1" fill="#000080"/><rect x="226" y="97" width="1" height="1" fill="#000"/><rect x="227" y="97" width="1" height="1" fill="#a8a48c"/><rect x="228" y="97" width="1" height="1" fill="#8c8400"/><rect x="229" y="97" width="1" height="1" fill="#a8a48c"/><rect x="230" y="97" width="1" height="1" fill="#8c8400"/><rect x="231" y="97" width="1" height="1" fill="#a8a48c"/><rect x="232" y="97" width="1" height="1" fill="#000080"/><rect x="233" y="97" width="1" height="1" fill="#fff"/><rect x="234" y="97" width="3" height="1" fill="#000"/><rect x="237" y="97" width="2" height="1" fill="#fff"/><rect x="239" y="97" width="3" height="1" fill="#000080"/><rect x="226" y="98" width="1" height="1" fill="#000"/><rect x="227" y="98" width="1" height="1" fill="#8c8400"/><rect x="228" y="98" width="1" height="1" fill="#a8a48c"/><rect x="229" y="98" width="1" height="1" fill="#8c8400"/><rect x="230" y="98" width="1" height="1" fill="#a8a48c"/><rect x="231" y="98" width="1" height="1" fill="#8c8400"/><rect x="232" y="98" width="1" height="1" fill="#000080"/><rect x="233" y="98" width="8" height="1" fill="#fff"/><rect x="241" y="98" width="1" height="1" fill="#000080"/><rect x="226" y="99" width="1" height="1" fill="#000"/><rect x="227" y="99" width="1" height="1" fill="#a8a48c"/><rect x="228" y="99" width="1" height="1" fill="#8c8400"/><rect x="229" y="99" width="1" height="1" fill="#a8a48c"/><rect x="230" y="99" width="1" height="1" fill="#8c8400"/><rect x="231" y="99" width="1" height="1" fill="#a8a48c"/><rect x="232" y="99" width="1" height="1" fill="#000080"/><rect x="233" y="99" width="1" height="1" fill="#fff"/><rect x="234" y="99" width="6" height="1" fill="#000"/><rect x="240" y="99" width="1" height="1" fill="#fff"/><rect x="241" y="99" width="1" height="1" fill="#000080"/><rect x="226" y="100" width="6" height="1" fill="#000"/><rect x="232" y="100" width="1" height="1" fill="#000080"/><rect x="233" y="100" width="8" height="1" fill="#fff"/><rect x="241" y="100" width="1" height="1" fill="#000080"/><rect x="232" y="101" width="10" height="1" fill="#000080"/>
 <!-- sep -->
 <rect x="251" y="86" width="1" height="19" fill="#b5b090"/><rect x="252" y="86" width="1" height="19" fill="#fff"/>
 <!-- B -->
 <path d="M264 90H271Q273 90 273 92V93Q273 94 272 94.5Q273 95 273 96V97Q273 99 271 99H264V98H265V91H264ZM267 91V94H269.5V91ZM267 95V98H269.5V95Z" fill="#000" fill-rule="evenodd" shape-rendering="auto"/>
 <!-- I -->
 <path d="M291.5 90H298V91.6H296.8L290.6 97.4H291.6V99H285V97.4H286.2L292.4 91.6H291.5Z" fill="#000" shape-rendering="auto"/>
 <!-- U -->
 <path d="M311 90H315V91H314V96Q314 97 315.5 97Q317 97 317 96V91H316V90H320V91H319V96Q319 98.5 315.5 98.5Q312 98.5 312 96V91H311Z" fill="#000" shape-rendering="auto"/>
 <rect x="311" y="100" width="9" height="1" fill="#000"/>
 <!-- sep -->
 <rect x="334" y="86" width="1" height="19" fill="#b5b090"/><rect x="335" y="86" width="1" height="19" fill="#fff"/>
 <!-- fonts -->
 <text x="349.5" y="100" font-family="Liberation Serif" font-weight="bold" font-size="15" fill="#000080" text-anchor="middle">A</text>
 <text x="372.5" y="98" font-family="Liberation Serif" font-weight="bold" font-size="15" fill="#000080" text-anchor="middle">A</text>
 <rect x="366" y="99" width="16" height="4" fill="#ff0000"/>
 <text x="398" y="102" font-family="Liberation Serif" font-weight="bold" font-size="19" fill="#000" text-anchor="middle">A</text>
 <path d="M402 90H407L404.5 87.5Z" fill="#000" shape-rendering="auto"/>
 <text x="419.5" y="100" font-family="Liberation Serif" font-weight="bold" font-size="10.5" fill="#000" text-anchor="middle">A</text>
 <path d="M423 88H428L425.5 91Z" fill="#000" shape-rendering="auto"/>
 <!-- sep -->
 <rect x="440" y="86" width="1" height="19" fill="#b5b090"/><rect x="441" y="86" width="1" height="19" fill="#fff"/>
 <!-- align left -->
 <g fill="#000">
  <rect x="450" y="89" width="8" height="1"/><rect x="450" y="91" width="11" height="1"/><rect x="450" y="93" width="8" height="1"/><rect x="450" y="95" width="11" height="1"/><rect x="450" y="97" width="8" height="1"/><rect x="450" y="99" width="11" height="1"/>
  <rect x="475" y="89" width="8" height="1"/><rect x="474" y="91" width="11" height="1"/><rect x="475" y="93" width="8" height="1"/><rect x="474" y="95" width="11" height="1"/><rect x="475" y="97" width="8" height="1"/><rect x="474" y="99" width="11" height="1"/>
  <rect x="501" y="89" width="8" height="1"/><rect x="498" y="91" width="11" height="1"/><rect x="501" y="93" width="8" height="1"/><rect x="498" y="95" width="11" height="1"/><rect x="501" y="97" width="8" height="1"/><rect x="498" y="99" width="11" height="1"/>
  <rect x="520" y="89" width="14" height="1"/><rect x="520" y="91" width="14" height="1"/><rect x="520" y="93" width="14" height="1"/><rect x="520" y="95" width="14" height="1"/><rect x="520" y="97" width="14" height="1"/><rect x="520" y="99" width="14" height="1"/>
 </g>
 <!-- sep -->
 <rect x="545" y="86" width="1" height="19" fill="#b5b090"/><rect x="546" y="86" width="1" height="19" fill="#fff"/>
 <!-- page break -->
 <path d="M556 88H557V92H566V88H567V93H556Z" fill="#000"/>
 <path d="M557 88H566V92H557Z" fill="#fff" opacity="0.6"/>
 <g fill="#000080"><rect x="555" y="94" width="3" height="1"/><rect x="559" y="94" width="5" height="1"/><rect x="565" y="94" width="3" height="1"/></g>
 <path d="M556 96H564V97H557V101H556Z" fill="#000"/>
 <path d="M564 97H565V98H566V99H567V101H566V100H565V99H564Z" fill="#000"/>
</svg>


<div class="a" style="left:1004px;top:112px;width:17px;height:620px;background:linear-gradient(to right,#eeede5 0,#f3f1ec 1px,#fdfdfa 50%,#f3f1ec 15px,#eeede5 16px)"></div>
<div class="a sbb" style="left:1005px;top:113px;height:17px"></div>
<svg class="a" style="left:1008px;top:118px" width="9" height="6" shape-rendering="crispEdges"><g fill="#4d6185"><rect x="4" y="0" width="1" height="1"/><rect x="3" y="1" width="3" height="1"/><rect x="2" y="2" width="5" height="1"/><rect x="1" y="3" width="3" height="1"/><rect x="5" y="3" width="3" height="1"/><rect x="0" y="4" width="3" height="1"/><rect x="6" y="4" width="3" height="1"/><rect x="1" y="5" width="1" height="1"/><rect x="7" y="5" width="1" height="1"/></g></svg>
<div class="a sbb" style="left:1005px;top:131px;height:137px"></div>
<svg class="a" style="left:1009px;top:195px" width="8" height="8" shape-rendering="crispEdges"><g fill="#eef4fe"><rect x="0" y="0" width="6" height="1"/><rect x="0" y="2" width="6" height="1"/><rect x="0" y="4" width="6" height="1"/><rect x="0" y="6" width="6" height="1"/></g><g fill="#8cb0f8"><rect x="1" y="1" width="6" height="1"/><rect x="1" y="3" width="6" height="1"/><rect x="1" y="5" width="6" height="1"/><rect x="1" y="7" width="6" height="1"/></g></svg>
<div class="a sbb" style="left:1005px;top:714px;height:17px"></div>
<svg class="a" style="left:1008px;top:720px" width="9" height="6" shape-rendering="crispEdges"><g fill="#4d6185"><rect x="1" y="0" width="1" height="1"/><rect x="7" y="0" width="1" height="1"/><rect x="0" y="1" width="3" height="1"/><rect x="6" y="1" width="3" height="1"/><rect x="1" y="2" width="3" height="1"/><rect x="5" y="2" width="3" height="1"/><rect x="2" y="3" width="5" height="1"/><rect x="3" y="4" width="3" height="1"/><rect x="4" y="5" width="1" height="1"/></g></svg>
<div class="a" style="left:9px;top:733px;width:1015px;height:1px;background:#aca899"></div>
<div class="a" style="left:1023px;top:111px;width:1px;height:623px;background:#aca899"></div>
<svg class="a" style="left:1008px;top:738px" width="14" height="14" shape-rendering="crispEdges"><g fill="#f4f8ff"><rect x="11" y="3" width="2" height="2"/><rect x="7" y="7" width="2" height="2"/><rect x="11" y="7" width="2" height="2"/><rect x="3" y="11" width="2" height="2"/><rect x="7" y="11" width="2" height="2"/><rect x="11" y="11" width="2" height="2"/></g><g fill="#5a7cc4"><rect x="10" y="2" width="2" height="2"/><rect x="6" y="6" width="2" height="2"/><rect x="10" y="6" width="2" height="2"/><rect x="2" y="10" width="2" height="2"/><rect x="6" y="10" width="2" height="2"/><rect x="10" y="10" width="2" height="2"/></g></svg>
</body></html>
